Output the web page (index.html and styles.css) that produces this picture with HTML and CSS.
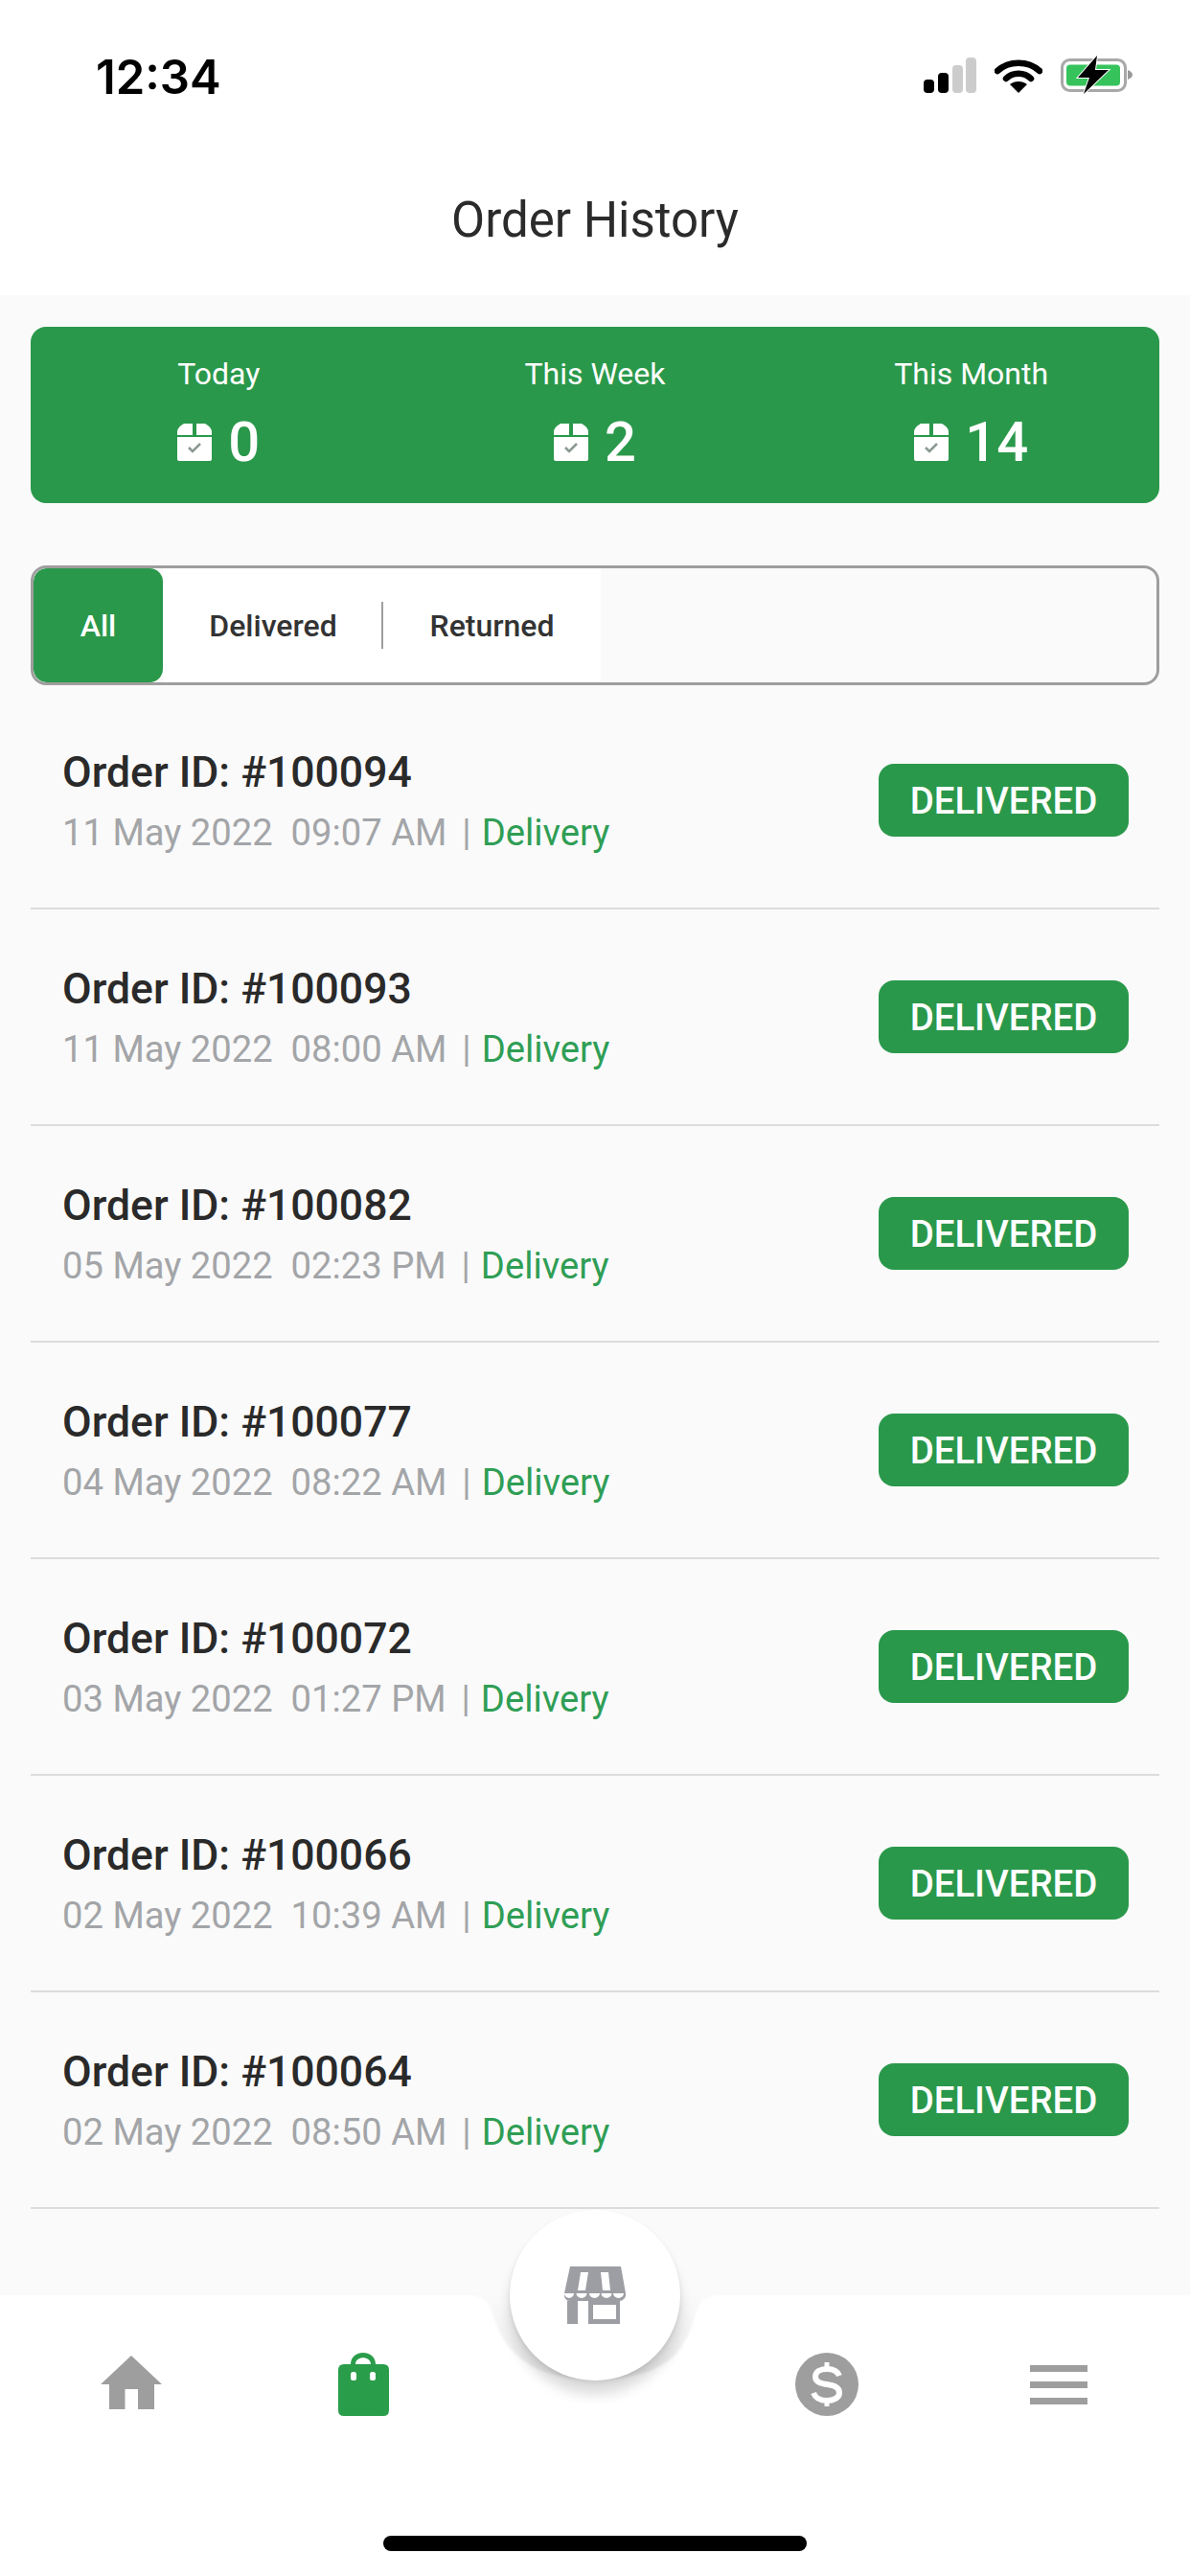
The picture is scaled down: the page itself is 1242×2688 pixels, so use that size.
FILE: index.html
```html
<!DOCTYPE html>
<html lang="en">
<head>
<meta charset="utf-8">
<title>Order History</title>
<link rel="stylesheet" href="styles.css">
</head>
<body>
<div class="app">
  <header class="top">
    <div class="status">
      <span class="clock">12:34</span>
      <div class="status-icons">
        <svg class="sig" viewBox="0 0 55 37"><rect x="0" y="23" width="11" height="14" rx="4" fill="#000"/><rect x="15" y="16" width="11" height="21" rx="4" fill="#000"/><rect x="30" y="8" width="11" height="29" rx="4" fill="#ccc"/><rect x="44" y="0" width="11" height="37" rx="4" fill="#ccc"/></svg>
        <svg class="wifi" viewBox="0 0 50 35"><path d="M3 12C15 1 35 1 47 12" fill="none" stroke="#000" stroke-width="6.5" stroke-linecap="round"/><path d="M12 20C19 13 31 13 38 20" fill="none" stroke="#000" stroke-width="6.5" stroke-linecap="round"/><path d="M25 35L16 26C21 22 29 22 34 26Z" fill="#000"/></svg>
        <svg class="batt" viewBox="0 0 75 40"><rect x="1.5" y="4.5" width="66" height="32" rx="8" fill="none" stroke="#a8a8a8" stroke-width="3"/><rect x="6" y="9.500" width="56" height="22" rx="4" fill="#36c35c"/><path d="M70 15c3 1 5 3 5 5s-2 4-5 5z" fill="#999"/><path d="M38 0L18 23H30L24 40L50 15H36Z" fill="#000" stroke="#fff" stroke-width="2" paint-order="stroke"/></svg>
      </div>
    </div>
    <h1 class="title">Order History</h1>
  </header>

  <section class="summary">
    <div class="stat"><span class="stat-label">Today</span><div class="stat-value"><svg class="box" viewBox="0 0 36 39"><path d="M7 0H16V12H0V8Q1 3 7 0ZM20 0H29Q35 3 36 8V12H20ZM0 14H36V37Q36 39 34 39H2Q0 39 0 37Z" fill="#fff"/><path d="M12 25L16 29L24 21" fill="none" stroke="#8a9a90" stroke-width="2.5"/></svg><span>0</span></div></div>
    <div class="stat"><span class="stat-label">This Week</span><div class="stat-value"><svg class="box" viewBox="0 0 36 39"><path d="M7 0H16V12H0V8Q1 3 7 0ZM20 0H29Q35 3 36 8V12H20ZM0 14H36V37Q36 39 34 39H2Q0 39 0 37Z" fill="#fff"/><path d="M12 25L16 29L24 21" fill="none" stroke="#8a9a90" stroke-width="2.5"/></svg><span>2</span></div></div>
    <div class="stat"><span class="stat-label">This Month</span><div class="stat-value"><svg class="box" viewBox="0 0 36 39"><path d="M7 0H16V12H0V8Q1 3 7 0ZM20 0H29Q35 3 36 8V12H20ZM0 14H36V37Q36 39 34 39H2Q0 39 0 37Z" fill="#fff"/><path d="M12 25L16 29L24 21" fill="none" stroke="#8a9a90" stroke-width="2.5"/></svg><span>14</span></div></div>
  </section>

  <nav class="tabs">
    <span class="tab tab-active">All</span>
    <span class="tab tab-delivered">Delivered</span>
    <span class="tab tab-returned">Returned</span>
  </nav>

  <main class="orders">
    <article class="order"><div class="order-info"><div class="order-id">Order ID: #100094</div><div class="order-meta">11 May 2022&nbsp; 09:07 AM&nbsp; <span class="sep">|</span> <span class="order-type">Delivery</span></div></div><span class="badge">DELIVERED</span></article>
    <article class="order"><div class="order-info"><div class="order-id">Order ID: #100093</div><div class="order-meta">11 May 2022&nbsp; 08:00 AM&nbsp; <span class="sep">|</span> <span class="order-type">Delivery</span></div></div><span class="badge">DELIVERED</span></article>
    <article class="order"><div class="order-info"><div class="order-id">Order ID: #100082</div><div class="order-meta">05 May 2022&nbsp; 02:23 PM&nbsp; <span class="sep">|</span> <span class="order-type">Delivery</span></div></div><span class="badge">DELIVERED</span></article>
    <article class="order"><div class="order-info"><div class="order-id">Order ID: #100077</div><div class="order-meta">04 May 2022&nbsp; 08:22 AM&nbsp; <span class="sep">|</span> <span class="order-type">Delivery</span></div></div><span class="badge">DELIVERED</span></article>
    <article class="order"><div class="order-info"><div class="order-id">Order ID: #100072</div><div class="order-meta">03 May 2022&nbsp; 01:27 PM&nbsp; <span class="sep">|</span> <span class="order-type">Delivery</span></div></div><span class="badge">DELIVERED</span></article>
    <article class="order"><div class="order-info"><div class="order-id">Order ID: #100066</div><div class="order-meta">02 May 2022&nbsp; 10:39 AM&nbsp; <span class="sep">|</span> <span class="order-type">Delivery</span></div></div><span class="badge">DELIVERED</span></article>
    <article class="order"><div class="order-info"><div class="order-id">Order ID: #100064</div><div class="order-meta">02 May 2022&nbsp; 08:50 AM&nbsp; <span class="sep">|</span> <span class="order-type">Delivery</span></div></div><span class="badge">DELIVERED</span></article>
  </main>

  <footer class="bar">
    <svg class="notch" viewBox="0 0 320 120"><defs><linearGradient id="notchFill" x1="0" y1="0" x2="0" y2="1"><stop offset="0" stop-color="#fafafa"/><stop offset="1" stop-color="#ececec"/></linearGradient></defs><path d="M22 0C40 0 47 5 51 13C55 26 60 44 76 60C95 80 125 88 160 88C195 88 228 80 246 60C258 44 264 26 267 13C271 5 279 0 297 0Z" fill="url(#notchFill)"/></svg>
    <div class="fab">
      <svg class="store" viewBox="0 0 64 60"><path d="M6 0H59L64 28V31Q62 36 57 36H6Q1 36 0 31V28Z" fill="#9c9ea3"/><path d="M17 6H25L22 25H14ZM38 6H46L48 25H40Z" fill="#fff"/><path d="M0 28h10a5 5 0 0 1-10 0zM12.500 28h11a5.500 5 0 0 1-11 0zM26 28h11a5.500 5 0 0 1-11 0zM38.500 28h11a5.500 5 0 0 1-11 0zM51 28h11a5.500 5 0 0 1-11 0z" fill="#fff"/><path d="M3 36H14V60H3ZM25 36H58V60H25ZM30 40V55H54V40Z" fill="#9c9ea3" fill-rule="evenodd"/></svg>
    </div>
    <div class="bar-icons">
      <svg class="home" viewBox="0 0 64 56"><path d="M32 0L64 30H56V56H39V35H25.500V56H9V30H0Z" fill="#9e9e9e"/></svg>
      <svg class="bag" viewBox="0 0 53 66"><path d="M13 14V12C13 -4 39 -4 39 12V14H34V12C34 3 18 3 18 12V14Z" fill="#2a9d4a"/><path d="M6 12H47Q53 12 53 18V60Q53 66 47 66H6Q0 66 0 60V18Q0 12 6 12Z" fill="#2a9d4a"/><rect x="13" y="20" width="6" height="9" rx="2.500" fill="#fff"/><rect x="33" y="20" width="6" height="9" rx="2.500" fill="#fff"/></svg>
      <svg class="dollar" viewBox="0 0 66 66"><circle cx="33" cy="33" r="33" fill="#9e9e9e"/><path d="M46 24C44 19 39 17 33 17C26 17 21 20 21 25C21 37 46 29 46 42C46 47 40 50 33 50C26 50 21 47 19 42" fill="none" stroke="#fff" stroke-width="6"/><path d="M33 10V56" stroke="#fff" stroke-width="5" stroke-dasharray="8 30"/></svg>
      <div class="menu"><i></i><i></i><i></i></div>
    </div>
    <div class="home-line"></div>
  </footer>
</div>
</body>
</html>
```

FILE: styles.css
```css
* { box-sizing: border-box; }
html, body { margin: 0; padding: 0; }
body { font-family: Roboto, sans-serif; background: #fafafa; color: #212121; }
.app { width: 1242px; height: 2688px; display: flex; flex-direction: column; overflow: hidden; }

.top { background: #fff; height: 308px; }
.status { height: 200px; display: flex; justify-content: space-between; align-items: flex-start; padding: 53px 60px 0 100px; }
.clock { font-family: Inter, sans-serif; font-weight: 600; font-size: 49px; line-height: 52px; color: #000; margin-top: 2px; }
.status-icons { display: flex; align-items: flex-end; gap: 19px; margin-top: 5px; height: 40px; }
.sig { width: 55px; height: 37px; margin-bottom: 1px; }
.wifi { width: 50px; height: 35px; margin-bottom: 1px; }
.batt { width: 75px; height: 40px; }
.title { margin: 0; font-weight: 400; font-size: 51px; line-height: 60px; text-align: center; color: #2b2b2b; }

.summary { margin: 33px 32px 0; height: 184px; background: #2a984b; border-radius: 16px; display: grid; grid-template-columns: repeat(3, 1fr); color: #fff; padding-top: 29px; }
.stat { display: flex; flex-direction: column; align-items: center; }
.stat-label { font-size: 32px; line-height: 40px; }
.stat-value { display: flex; align-items: center; gap: 17px; font-size: 58px; font-weight: 500; line-height: 66px; margin-top: 18px; }
.box { width: 36px; height: 39px; }

.tabs { margin: 65px 32px 0; height: 125px; border: 3px solid #9e9e9e; border-radius: 16px; display: flex; align-items: stretch; background: #fafafa; overflow: hidden; }
.tab { display: flex; align-items: center; justify-content: center; font-size: 32px; font-weight: 500; background: #fff; color: #333; }
.tab-active { width: 135px; background: #2a984b; color: #fff; border-radius: 14px; }
.tab-delivered { width: 230px; position: relative; }
.tab-delivered::after { content: ""; position: absolute; right: 0; top: 35px; height: 49px; width: 2px; background: #9e9e9e; }
.tab-returned { width: 227px; }

.orders { margin: 8px 32px 0; }
.order { height: 226px; border-bottom: 2px solid #dcdcdc; padding: 0 32px 0 33px; display: flex; align-items: center; justify-content: space-between; }
.order-info { margin-top: 3px; }
.order-id { font-size: 44.5px; font-weight: 500; line-height: 50px; color: #2a2a2a; }
.order-meta { font-size: 38.2px; line-height: 46px; color: #a3a5a8; margin-top: 15px; }
.sep { margin: 0 1.5px 0 -3px; }
.order-type { color: #2f9e55; }
.badge { width: 261px; height: 76px; border-radius: 16px; background: #2a984b; color: #fff; font-size: 38.4px; font-weight: 500; display: flex; align-items: center; justify-content: center; }

.bar { position: relative; flex: 1; margin-top: 90px; background: #fff; }
.notch { position: absolute; left: 461px; top: 0; width: 320px; height: 120px; filter: blur(1px); }
.fab { position: absolute; left: 532px; top: -89px; width: 178px; height: 178px; border-radius: 50%; background: #fff; display: flex; align-items: center; justify-content: center; box-shadow: 0 2px 4px rgba(0,0,0,.08), 0 14px 14px rgba(0,0,0,.15); }
.store { width: 64px; height: 60px; }
.bar-icons { position: relative; display: flex; align-items: center; padding: 60px 0 0 105px; }
.home { width: 64px; height: 56px; margin-top: -4px; }
.bag { width: 53px; height: 66px; margin-left: 184px; }
.dollar { width: 66px; height: 66px; margin-left: 424px; }
.menu { width: 60px; height: 41px; display: flex; flex-direction: column; justify-content: space-between; margin-left: 179px; }
.menu i { display: block; height: 7px; background: #9e9e9e; }
.home-line { position: absolute; left: 400px; top: 251px; width: 442px; height: 16px; border-radius: 8px; background: #000; }
```
